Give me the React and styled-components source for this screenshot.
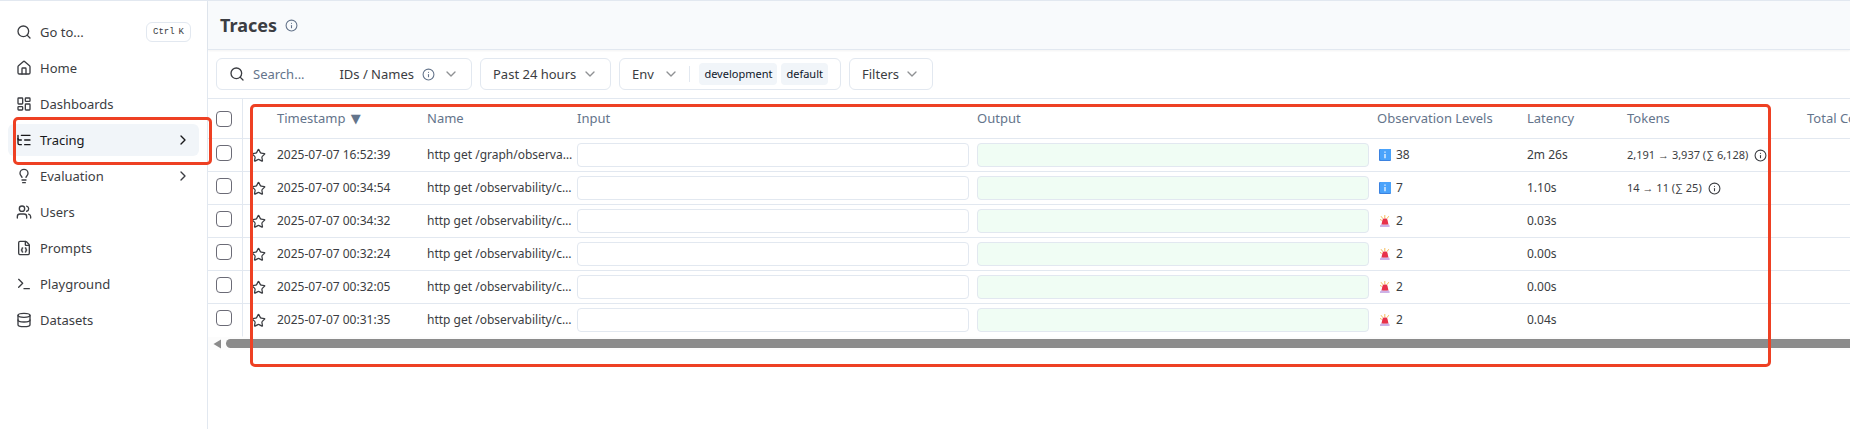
import React, { useState } from 'react';
import styled, { createGlobalStyle } from 'styled-components';
import {
  Search, House, LayoutDashboard, ListTree, Lightbulb, Users, FileJson,
  Terminal, Database, ChevronRight, ChevronDown, Info, Star
} from 'lucide-react';

const links = [
  { name: 'Home', icon: House },
  { name: 'Dashboards', icon: LayoutDashboard },
  { name: 'Tracing', icon: ListTree, active: true, nested: true },
  { name: 'Evaluation', icon: Lightbulb, nested: true },
  { name: 'Users', icon: Users },
  { name: 'Prompts', icon: FileJson },
  { name: 'Playground', icon: Terminal },
  { name: 'Datasets', icon: Database },
]

const traces = [
  { time: '2025-07-07 16:52:39', name: 'http get /graph/observa…', level: 'info', count: 38, latency: '2m 26s', tokens: ['2,191', '3,937', '6,128'] },
  { time: '2025-07-07 00:34:54', name: 'http get /observability/c…', level: 'info', count: 7, latency: '1.10s', tokens: ['14', '11', '25'] },
  { time: '2025-07-07 00:34:32', name: 'http get /observability/c…', level: 'error', count: 2, latency: '0.03s' },
  { time: '2025-07-07 00:32:24', name: 'http get /observability/c…', level: 'error', count: 2, latency: '0.00s' },
  { time: '2025-07-07 00:32:05', name: 'http get /observability/c…', level: 'error', count: 2, latency: '0.00s' },
  { time: '2025-07-07 00:31:35', name: 'http get /observability/c…', level: 'error', count: 2, latency: '0.04s' },
]

const columns = [35, 26, 150, 150, 400, 400, 150, 100, 180, 150]

function InfoBadge() {
  return (
    <svg width="12" height="12" viewBox="0 0 12 12" aria-hidden="true">
      <rect width="12" height="12" rx="1" fill="#3b82e0" />
      <rect x="1" width="11" height="11" rx="1" fill="#4aa3fb" />
      <path d="M6 2.5v1.2M6 5v4.2" stroke="#fff" strokeWidth="1.2" />
    </svg>
  );
}

function Siren() {
  return (
    <svg width="12" height="12" viewBox="0 0 12 12" aria-hidden="true">
      <path d="M2 1.200l2 2.600M5.800 0v3M9.800 1.200l-2 2.600M1 4.400l1.800 1" stroke="#f5bd5c" strokeWidth="1" fill="none" />
      <path d="M2.400 9.800l1-4.600Q3.800 3.600 5 3.600h2q1.200 0 1.500 1.500l1 4.700z" fill="#e8324a" />
      <path d="M1 10.400l1.400-1.200q3.600 1.200 7.200 0l1 1.200V12H1z" fill="#cdb2e6" />
    </svg>
  );
}

function Sidebar() {
  return (
    <Side>
      <SideItem as="button" type="button">
        <Search size={16} />
        <span>Go to...</span>
        <Kbd><span>Ctrl</span><span>K</span></Kbd>
      </SideItem>
      {links.map(({ name, icon: Icon, active, nested }) => (
        <SideItem key={name} href={`#${name.toLowerCase()}`} $active={active}>
          <Icon size={16} />
          <span>{name}</span>
          {nested && <Arrow size={16} />}
        </SideItem>
      ))}
    </Side>
  );
}

function Toolbar() {
  return (
    <Bar>
      <SearchBox>
        <Search size={16} />
        <SearchInput type="text" placeholder="Search..." aria-label="Search traces" />
        <SearchType type="button">
          IDs / Names
          <Info size={13} color="#64748b" />
          <Chevron size={16} />
        </SearchType>
      </SearchBox>
      <Control type="button" $width={131}>Past 24 hours <Chevron size={16} /></Control>
      <Control type="button" $width={222}>
        Env
        <Chevron size={16} />
        <Divider />
        <Chips>
          <Chip>development</Chip>
          <Chip>default</Chip>
        </Chips>
      </Control>
      <Control type="button" $width={84}>Filters <Chevron size={16} /></Control>
    </Bar>
  );
}

function TokenUsage({ tokens }) {
  const [input, output, total] = tokens
  return (
    <Tokens>
      <span>{input} <TokenArrow>→</TokenArrow> {output} (∑ {total})</span>
      <Info size={13} />
    </Tokens>
  );
}

function TracesTable() {
  const [selected, setSelected] = useState([])
  const toggle = (time) => setSelected(selected.includes(time) ? selected.filter(t => t !== time) : [...selected, time])
  const all = selected.length === traces.length
  return (
    <TableWrap>
      <Table>
        <colgroup>
          {columns.map((width, i) => <Col key={i} $width={width} />)}
        </colgroup>
        <thead>
          <tr>
            <SelectHead>
              <Check type="checkbox" aria-label="Select all" checked={all} onChange={() => setSelected(all ? [] : traces.map(t => t.time))} />
            </SelectHead>
            <Head />
            <Head>Timestamp <Sort>▼</Sort></Head>
            <Head>Name</Head>
            <Head>Input</Head>
            <Head>Output</Head>
            <Head>Observation Levels</Head>
            <Head>Latency</Head>
            <Head>Tokens</Head>
            <Head>Total Cost</Head>
          </tr>
        </thead>
        <tbody>
          {traces.map((trace) => (
            <Row key={trace.time}>
              <SelectCell>
                <Check type="checkbox" aria-label={`Select ${trace.time}`} checked={selected.includes(trace.time)} onChange={() => toggle(trace.time)} />
              </SelectCell>
              <Cell><StarButton type="button" aria-label="Bookmark"><Star size={15} /></StarButton></Cell>
              <Cell>{trace.time}</Cell>
              <Cell>{trace.name}</Cell>
              <Cell><IoBox /></Cell>
              <Cell><IoBox $output /></Cell>
              <Cell>
                <Level>
                  {trace.level === 'info' ? <InfoBadge /> : <Siren />}
                  {trace.count}
                </Level>
              </Cell>
              <Cell>{trace.latency}</Cell>
              <Cell>{trace.tokens && <TokenUsage tokens={trace.tokens} />}</Cell>
              <Cell />
            </Row>
          ))}
        </tbody>
      </Table>
      <Scrollbar>
        <ScrollArrow width="8" height="10" viewBox="0 0 8 10"><path d="M8 .5v9L.5 5z" fill="#8b8b8b" /></ScrollArrow>
        <Thumb />
      </Scrollbar>
    </TableWrap>
  );
}

export default function App() {
  return (
    <>
      <GlobalStyle />
      <Page>
        <Sidebar />
        <Main>
          <Header>
            <Title>Traces</Title>
            <Info size={13} color="#64748b" />
          </Header>
          <Toolbar />
          <TracesTable />
        </Main>
        <NavMark />
        <TableMark />
      </Page>
    </>
  );
}

const GlobalStyle = createGlobalStyle`
  * {
    box-sizing: border-box;
  }

  body {
    margin: 0;
    background: #fff;
    color: #3b3d42;
    font: 13px/20px "Noto Sans", sans-serif;
    overflow: hidden;
  }

  button, input {
    font: inherit;
    color: inherit;
  }

  svg {
    flex-shrink: 0;
  }
`
const Page = styled.div`
  position: relative;
  display: flex;
  min-height: 100vh;
  border-top: 1px solid #e2e8f0;
`
const Side = styled.nav`
  display: flex;
  flex-direction: column;
  gap: 4px;
  flex: 0 0 208px;
  padding: 15px 8px;
  border-right: 1px solid #e2e8f0;
`
const SideItem = styled.a`
  display: flex;
  align-items: center;
  gap: 8px;
  height: 32px;
  padding: 0 8px;
  border: 0;
  border-radius: 6px;
  background: ${({$active}) => $active ? "#f1f5f9" : "transparent"};
  color: ${({$active}) => $active ? "#18181b" : "inherit"};
  text-decoration: none;
`
const Arrow = styled(ChevronRight)`
  margin-left: auto;
`
const Kbd = styled.kbd`
  display: flex;
  align-items: center;
  gap: 4px;
  height: 20px;
  margin-left: auto;
  padding: 0 6px;
  border: 1px solid #e2e8f0;
  border-radius: 6px;
  font: 9px "Liberation Mono", monospace;
`
const Main = styled.main`
  flex: 1;
  min-width: 0;
`
const Header = styled.header`
  display: flex;
  align-items: center;
  gap: 8px;
  height: 49px;
  padding: 0 12px;
  background: #f8fafc;
  border-bottom: 1px solid #e2e8f0;
  box-shadow: 0 1px 2px rgba(0, 0, 0, 0.05);
`
const Title = styled.h1`
  margin: 0;
  font-size: 18px;
  line-height: 24px;
  font-weight: 700;
`
const Bar = styled.div`
  display: flex;
  gap: 8px;
  padding: 8px;
  border-bottom: 1px solid #e2e8f0;
`
const SearchBox = styled.div`
  display: flex;
  align-items: center;
  width: 256px;
  height: 32px;
  padding: 0 12px;
  border: 1px solid #e2e8f0;
  border-radius: 6px;
`
const SearchInput = styled.input`
  flex: 1;
  min-width: 0;
  padding: 0 8px;
  border: 0;
  outline: 0;
  background: transparent;

  &::placeholder {
    color: #64748b;
    opacity: 1;
  }
`
const SearchType = styled.button`
  display: flex;
  align-items: center;
  gap: 8px;
  padding: 0;
  border: 0;
  background: transparent;
`
const Control = styled.button`
  display: flex;
  align-items: center;
  justify-content: space-between;
  width: ${({$width}) => $width}px;
  height: 32px;
  padding: 0 12px;
  border: 1px solid #e2e8f0;
  border-radius: 6px;
  background: #fff;
  white-space: nowrap;
`
const Chevron = styled(ChevronDown)`
  color: #8f9194;
`
const Divider = styled.span`
  width: 1px;
  height: 16px;
  background: #e2e8f0;
`
const Chips = styled.span`
  display: flex;
  gap: 4px;
`
const Chip = styled.span`
  padding: 0 5px;
  border-radius: 4px;
  background: #f1f5f9;
  color: #0f172a;
  font-size: 11px;
  line-height: 22px;
`
const TableWrap = styled.div`
  overflow: hidden;
`
const Table = styled.table`
  width: 1741px;
  table-layout: fixed;
  border-collapse: separate;
  border-spacing: 0;
`
const Col = styled.col`
  width: ${({$width}) => $width}px;
`
const Head = styled.th`
  height: 40px;
  padding: 0 0 2px 8px;
  border-bottom: 1px solid #e2e8f0;
  color: #64748b;
  font-weight: 400;
  text-align: left;
  white-space: nowrap;
`
const SelectHead = styled(Head)`
  padding-bottom: 0;
  border-right: 1px solid #e2e8f0;
`
const Sort = styled.span`
  margin-left: 2px;
  font-family: "DejaVu Sans", sans-serif;
  line-height: 16px;
`
const Cell = styled.td`
  height: 33px;
  padding: 0 0 0 8px;
  border-bottom: 1px solid #e2e8f0;
  font-size: 12px;
  line-height: 16px;
  white-space: nowrap;
`
const SelectCell = styled(Cell)`
  padding-bottom: 4px;
  border-right: 1px solid #e2e8f0;
`
const Row = styled.tr`
  &:last-child > td {
    border-bottom-color: transparent;
  }
`
const Check = styled.input`
  appearance: none;
  display: block;
  width: 16px;
  height: 16px;
  margin: 0;
  border: 1px solid #6b6b76;
  border-radius: 4px;

  &:checked {
    background: #3b3d42;
  }
`
const StarButton = styled.button`
  display: block;
  padding: 0;
  border: 0;
  background: transparent;

  svg {
    display: block;
  }
`
const IoBox = styled.div`
  height: 24px;
  border: 1px solid #e2e8f0;
  border-radius: 4px;
  background: ${({$output}) => $output ? "#f0fdf4" : "#fff"};
`
const Level = styled.span`
  display: flex;
  align-items: center;
  gap: 5px;
  padding-left: 2px;
`
const Tokens = styled.span`
  display: flex;
  align-items: center;
  gap: 6px;
  font-size: 11px;
`
const TokenArrow = styled.span`
  font-family: "Liberation Sans", sans-serif;
`
const Scrollbar = styled.div`
  display: flex;
  align-items: center;
  gap: 5px;
  height: 13px;
  padding-left: 5px;
  background: #fcfcfc;
`
const ScrollArrow = styled.svg`
  display: block;
`
const Thumb = styled.div`
  flex: 1;
  height: 9px;
  border-radius: 5px 0 0 5px;
  background: #8b8b8b;
`
// red outlines that lie over the active link and the table
const Mark = styled.div`
  position: absolute;
  border: 3px solid #ee4023;
  border-radius: 5px;
  pointer-events: none;
`
const NavMark = styled(Mark)`
  left: 13px;
  top: 116px;
  width: 199px;
  height: 48px;
`
const TableMark = styled(Mark)`
  left: 250px;
  right: 79px;
  top: 103px;
  height: 263px;
`
